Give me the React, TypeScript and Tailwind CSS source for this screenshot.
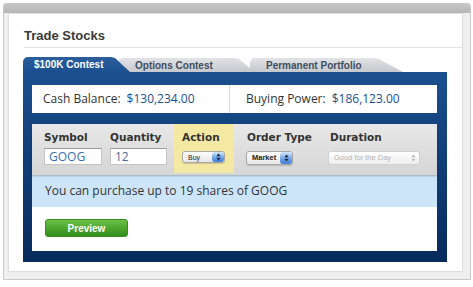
import React from "react";

function Stepper({ disabled }: { disabled?: boolean }) {
  return (
    <div
      className={
        disabled
          ? "flex h-full w-[12px] items-center justify-center"
          : "flex h-full w-[12px] items-center justify-center rounded-[3px] bg-gradient-to-b from-[#d6e7fc] via-[#79aaea] to-[#3f7bd2]"
      }
    >
      <svg width="5" height="8" viewBox="0 0 5 8">
        <path d="M2.5 0.5L4.6 3.2H0.4Z M2.5 7.5L0.4 4.8H4.6Z" fill={disabled ? "#b9b9b9" : "#142640"} />
      </svg>
    </div>
  );
}

function Label({ children }: { children: React.ReactNode }) {
  return (
    <div className="h-[14px] text-[10.5px] leading-[14px] font-bold text-[#333] [font-family:'DejaVu_Sans',sans-serif]">
      {children}
    </div>
  );
}

export default function App() {
  return (
    <div className="h-[287px] w-[473px] bg-white pt-[3px] pl-[3px]">
      <div className="flex h-[277px] w-[468px] flex-col rounded-t-[3px] border border-[#c9c9c9] bg-[#efefef]">
        <div className="h-[9px] rounded-t-[2px] bg-gradient-to-b from-[#c6c6c6] to-[#b6b6b6]" />
        <div className="ml-[4px] flex h-[259px] w-[455px] flex-col border border-[#dedede] bg-white">
          {/* Title */}
          <div className="ml-[15px] border-b border-[#e2e2e2] pt-[14px] pb-[3px]">
            <div className="h-[16px] text-[13px] leading-[16px] font-bold text-[#3a3a3a] [font-family:'Liberation_Sans',sans-serif]">
              Trade Stocks
            </div>
          </div>

          {/* Tabs */}
          <div className="mt-[9px] ml-[14px] flex h-[15px] items-end [font-family:'Liberation_Sans',sans-serif]">
            <div className="relative z-30 flex h-[15px] w-[107px] items-center rounded-tl-[5px] bg-gradient-to-b from-[#2a5e9d] to-[#1b4f8f] pl-[11px] text-[10px] font-bold text-white [clip-path:polygon(0_0,88px_0,92px_1px,107px_100%,0_100%)]">
              $100K Contest
            </div>
            <div className="relative z-20 -ml-[12px] flex h-[14px] w-[137px] items-center rounded-tl-[5px] bg-gradient-to-b from-[#e2e3e6] to-[#c5c8cd] pl-[17px] text-[10px] font-bold text-[#3f4d60] [clip-path:polygon(0_0,117px_0,121px_1px,137px_100%,0_100%)]">
              Options Contest
            </div>
            <div className="relative z-10 -ml-[5px] flex h-[14px] w-[153px] items-center rounded-tl-[5px] bg-gradient-to-b from-[#e2e3e6] to-[#c5c8cd] pl-[16px] text-[10px] font-bold text-[#3f4d60] [clip-path:polygon(0_0,125px_0,129px_1px,153px_100%,0_100%)]">
              Permanent Portfolio
            </div>
          </div>

          {/* Blue panel */}
          <div className="ml-[14px] w-[424px] bg-gradient-to-b from-[#1b4f8f] to-[#082b5d] pt-[13px] pr-[10px] pb-[11px] pl-[9px]">
            {/* Cash row */}
            <div className="flex h-[28px] items-center bg-white text-[12px] text-[#333] [font-family:'Open_Sans',sans-serif]">
              <div className="flex h-full w-[198px] items-center border-r border-[#d4d9e0] pl-[11px]">
                Cash Balance:<span className="ml-[6px] text-[#1c4f8e]">$130,234.00</span>
              </div>
              <div className="flex items-center pl-[16px]">
                Buying Power:<span className="ml-[6px] text-[#1c4f8e]">$186,123.00</span>
              </div>
            </div>

            {/* White container */}
            <div className="mt-[11px] flex h-[127px] flex-col bg-white">
              {/* Form */}
              <div className="relative z-10 flex h-[51px] bg-gradient-to-b from-[#e8e8e8] to-[#d5d5d5] pl-[12px] shadow-[0_1px_2px_rgba(0,0,0,0.25)]">
                <div className="flex w-[58px] flex-col pt-[6px]">
                  <Label>Symbol</Label>
                  <div className="mt-[4px] flex h-[17px] items-center border border-[#c4c4c4] border-t-[#9a9a9a] bg-white pl-[4px] text-[12px] text-[#3a6fb2] [font-family:'Open_Sans',sans-serif]">
                    GOOG
                  </div>
                </div>
                <div className="ml-[8px] flex w-[57px] flex-col pt-[6px]">
                  <Label>Quantity</Label>
                  <div className="mt-[4px] flex h-[17px] items-center border border-[#c4c4c4] border-t-[#9a9a9a] bg-white pl-[4px] text-[12px] text-[#4a6f9c] [font-family:'Open_Sans',sans-serif]">
                    12
                  </div>
                </div>
                <div className="ml-[7px] mb-[2px] flex w-[60px] flex-col bg-[#f3e9a3] pt-[6px] pl-[8px]">
                  <Label>Action</Label>
                  <div className="mt-[7px] flex h-[12px] w-[43px] items-center justify-between rounded-[3px] border border-[#a8a8a8] bg-gradient-to-b from-white to-[#e6e6e6] pl-[5px] shadow-[0_1px_1px_rgba(0,0,0,0.15)]">
                    <span className="text-[7px] leading-none text-[#222] [font-family:'Liberation_Sans',sans-serif]">Buy</span>
                    <Stepper />
                  </div>
                </div>
                <div className="ml-[12px] flex w-[70px] flex-col pt-[6px] pl-[1px]">
                  <Label>Order Type</Label>
                  <div className="mt-[7px] -ml-[1px] flex h-[14px] w-[47px] items-center justify-between rounded-[3px] border border-[#a8a8a8] bg-gradient-to-b from-white to-[#e6e6e6] pl-[5px] shadow-[0_1px_1px_rgba(0,0,0,0.15)]">
                    <span className="text-[7.5px] leading-none font-bold text-[#222] [font-family:'Liberation_Sans',sans-serif]">Market</span>
                    <Stepper />
                  </div>
                </div>
                <div className="ml-[12px] flex w-[92px] flex-col pt-[6px]">
                  <div className="pl-[2px]">
                    <Label>Duration</Label>
                  </div>
                  <div className="mt-[7px] flex h-[14px] w-[92px] items-center justify-between rounded-[3px] border border-[#d0d0d0] bg-gradient-to-b from-white to-[#eeeeee] pl-[5px]">
                    <span className="text-[7.5px] leading-none text-[#b3b3b3] [font-family:'Liberation_Sans',sans-serif]">Good for the Day</span>
                    <Stepper disabled />
                  </div>
                </div>
              </div>

              {/* Message */}
              <div className="flex h-[32px] items-center bg-[#cde5f9] pl-[13px] text-[12px] text-[#333] [font-family:'Open_Sans',sans-serif]">
                You can purchase up to 19 shares of GOOG
              </div>

              {/* Button */}
              <div className="pt-[12px] pl-[13px]">
                <div className="flex h-[18px] w-[83px] items-center justify-center rounded-[3px] border border-[#3b8a1f] bg-gradient-to-b from-[#6cc246] to-[#2f8d18] text-[10px] font-bold text-white [font-family:'Liberation_Sans',sans-serif]">
                  Preview
                </div>
              </div>
            </div>
          </div>
        </div>
      </div>
    </div>
  );
}
